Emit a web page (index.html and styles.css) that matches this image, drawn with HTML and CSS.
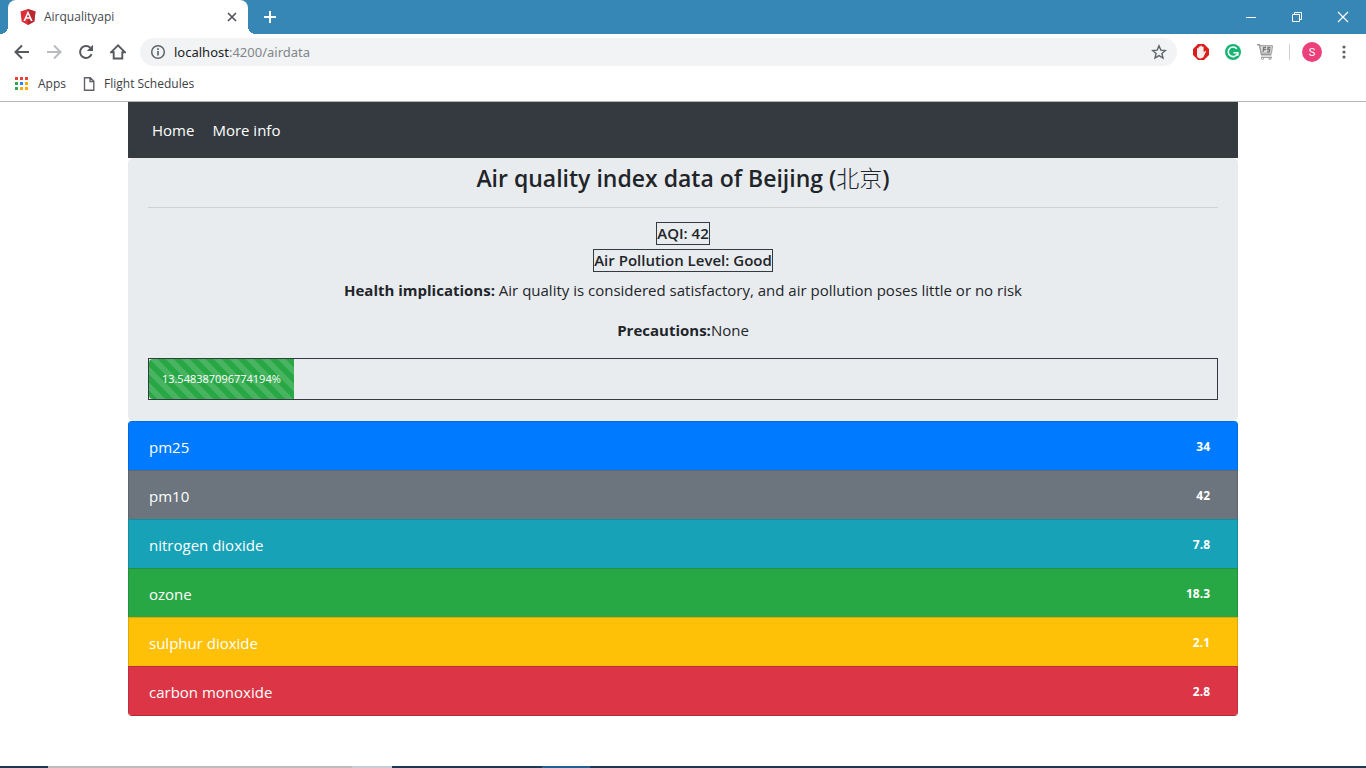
FILE: index.html
```html
<!DOCTYPE html>
<html lang="en">
<head>
<meta charset="utf-8">
<title>Airqualityapi</title>
<link rel="stylesheet" href="styles.css">
</head>
<body>
<div class="window">
  <header class="titlebar">
    <div class="tab">
      <svg class="tab-logo" width="16" height="16" viewBox="0 0 16 16"><path d="M8 0l7.500 2.600-1.200 9.800L8 16l-6.300-3.600L.5 2.600z" fill="#dd2f3a"/><path d="M8 0l7.500 2.600-1.200 9.800L8 16z" fill="#b72a33"/><path d="M8 1.800L3.400 12h1.800l.9-2.300h3.800l.9 2.300h1.800zM8 5.200l1.300 3.100H6.700z" fill="#fff" fill-rule="evenodd"/></svg>
      <span class="tab-title">Airqualityapi</span>
      <button class="plain" aria-label="Close tab"><svg width="10" height="10" viewBox="0 0 10 10"><path d="M1 1l8 8M9 1L1 9" stroke="#50545a" stroke-width="1.700"/></svg></button>
    </div>
    <button class="plain new-tab" aria-label="New tab"><svg width="12" height="12" viewBox="0 0 12 12"><path d="M6 0v12M0 6h12" stroke="#fff" stroke-width="2"/></svg></button>
    <div class="window-controls">
      <button class="plain" aria-label="Minimize"><svg width="12" height="12" viewBox="0 0 12 12"><path d="M1 6.500h10" stroke="#fff"/></svg></button>
      <button class="plain" aria-label="Restore"><svg width="12" height="12" viewBox="0 0 12 12" fill="none" stroke="#fff"><path d="M1.500 3.500h7v7h-7zM3.500 3.500v-2h7v7h-2"/></svg></button>
      <button class="plain" aria-label="Close"><svg width="12" height="12" viewBox="0 0 12 12"><path d="M1 1l10 10M11 1L1 11" stroke="#fff" stroke-width="1.200"/></svg></button>
    </div>
  </header>
  <div class="toolbar">
    <div class="nav-buttons">
      <button class="plain" aria-label="Back"><svg width="16" height="16" viewBox="0 0 16 16" fill="none" stroke="#55585d" stroke-width="2"><path d="M15 8H2M8 1.500L1.500 8 8 14.500"/></svg></button>
      <button class="plain" aria-label="Forward"><svg width="16" height="16" viewBox="0 0 16 16" fill="none" stroke="#b9bbbe" stroke-width="2"><path d="M1 8h13M8 1.500L14.500 8 8 14.500"/></svg></button>
      <button class="plain" aria-label="Reload"><svg width="16" height="16" viewBox="0 0 16 16"><path d="M13.600 10.200A6 6 0 1 1 12.300 3.700" fill="none" stroke="#55585d" stroke-width="2"/><path d="M15 .8V7H8.800z" fill="#55585d"/></svg></button>
      <button class="plain" aria-label="Home page"><svg width="16" height="16" viewBox="0 0 16 16"><path d="M8 1.400L1.200 8.200h2.500v6.300h8.600V8.200h2.500z" fill="none" stroke="#55585d" stroke-width="1.900"/></svg></button>
    </div>
    <div class="address">
      <svg width="16" height="16" viewBox="0 0 16 16"><circle cx="8" cy="8" r="6.300" fill="none" stroke="#5f6368" stroke-width="1.500"/><path d="M8 7v4.500M8 4.300v1.600" stroke="#5f6368" stroke-width="1.700"/></svg>
      <a class="url" href="#"><span class="host">localhost</span>:4200/airdata</a>
      <button class="plain" aria-label="Bookmark"><svg width="16" height="16" viewBox="0 0 16 16"><path d="M8 1.800l1.800 4.300 4.600.4-3.500 3 1.100 4.500L8 11.600 4 14l1.100-4.500-3.500-3 4.600-.4z" fill="none" stroke="#5f6368" stroke-width="1.400"/></svg></button>
    </div>
    <div class="extensions">
      <button class="plain" aria-label="Ad blocker"><svg width="16" height="16" viewBox="0 0 16 16"><path d="M5 0h6l5 5v6l-5 5H5l-5-5V5z" fill="#db1f1c"/><path d="M4 9V4.500q.8-1.200 1.600 0V3q.8-1.200 1.600 0v-.8q.9-1.200 1.700 0V3q.9-1 1.700 0v5.500l1.500-1.600q1.300-.4.800.9L10.500 13q-1 1.400-3.200 1.400Q4 14.200 4 11.200z" fill="#f5eeee"/></svg></button>
      <button class="plain" aria-label="Writing assistant"><svg width="16" height="16" viewBox="0 0 16 16"><circle cx="8" cy="8" r="8" fill="#16b573"/><path d="M11.800 4.800A4.800 4.800 0 1 0 12.300 10M8.500 8.800h4.300v3" fill="none" stroke="#fff" stroke-width="1.600"/></svg></button>
      <button class="plain" aria-label="Shopping cart"><svg width="16" height="16" viewBox="0 0 16 16" fill="none" stroke="#999"><path d="M0 .7h2.500l2 10.100h10" stroke-width="1.400"/><path d="M2.700 1.700h12.800l-1 7.500H4.200z" fill="#ddd"/><path d="M4 13.300h11" stroke-width="1.200"/><path d="M6 8l.7-4.500H9M6.500 5.700H9M13.500 3.500H11l-.3 2h2l-.4 2.300H10" stroke="#777" stroke-width="1.300"/><circle cx="5.500" cy="14.500" r="1"/><circle cx="13" cy="14.500" r="1"/></svg></button>
    </div>
    <span class="separator"></span>
    <button class="plain avatar" aria-label="Profile">S</button>
    <button class="plain" aria-label="Menu"><svg width="4" height="14" viewBox="0 0 4 14" fill="#5f6368"><circle cx="2" cy="2" r="1.600"/><circle cx="2" cy="7" r="1.600"/><circle cx="2" cy="12" r="1.600"/></svg></button>
  </div>
  <nav class="bookmarks">
    <a href="#"><svg width="14" height="14" viewBox="0 0 14 14"><path d="M0 0h3v3H0zM5 0h3v3H5zM10 0h3v3h-3z" fill="#ea4335"/><path d="M0 5h3v3H0zM0 10h3v3H0z" fill="#34a853"/><path d="M5 10h3v3H5z" fill="#fbaa05"/><path d="M5 5h3v3H5z" fill="#2684fc"/><path d="M10 5h3v3h-3zM10 10h3v3h-3z" fill="#fbaa05"/></svg>Apps</a>
    <a href="#"><svg width="12" height="14" viewBox="0 0 12 14" fill="none" stroke="#5f6368" stroke-width="1.400"><path d="M1.500.7h5.800l3.500 3.500v9.100H1.500zM7 .7v3.800h3.800"/></svg>Flight Schedules</a>
  </nav>
  <main class="container">
    <nav class="navbar"><a href="#">Home</a><a href="#">More info</a></nav>
    <section class="summary">
      <h1>Air quality index data of Beijing (<span class="cjk">北京</span>)</h1>
      <hr>
      <h2><span class="boxed">AQI: 42</span></h2>
      <h2><span class="boxed">Air Pollution Level: Good</span></h2>
      <p><strong>Health implications:</strong> Air quality is considered satisfactory, and air pollution poses little or no risk</p>
      <p><strong>Precautions:</strong>None</p>
      <div class="progress"><div class="bar" style="width:13.548%">13.548387096774194%</div></div>
    </section>
    <ul class="readings">
      <li class="blue">pm25<b>34</b></li>
      <li class="gray">pm10<b>42</b></li>
      <li class="teal">nitrogen dioxide<b>7.8</b></li>
      <li class="green">ozone<b>18.3</b></li>
      <li class="yellow">sulphur dioxide<b>2.1</b></li>
      <li class="red">carbon monoxide<b>2.8</b></li>
    </ul>
  </main>
  <footer class="taskbar"><span class="task-search"></span><span class="task-mic"></span><span class="task-gap"></span><span class="task-active"></span></footer>
</div>
</body>
</html>
```
FILE: styles.css
```css
* { box-sizing: border-box; }
body {
  margin: 0;
  background: #fff;
  color: #212529;
  font: 15px/24px "Open Sans", "Noto Sans", sans-serif;
}
.window { min-height: 100vh; display: flex; flex-direction: column; }
svg { display: block; flex: none; }
a { color: inherit; text-decoration: none; }
.plain {
  border: 0;
  padding: 0;
  background: none;
  color: inherit;
  display: flex;
  align-items: center;
  justify-content: center;
}
.titlebar { height: 34px; background: #3687b5; display: flex; align-items: center; padding-left: 8px; }
.tab {
  position: relative;
  width: 240px;
  height: 34px;
  padding: 0 11px 0 12px;
  display: flex;
  align-items: center;
  gap: 8px;
  background: #fff;
  border-radius: 8px 8px 0 0;
  font-size: 12px;
  color: #45494d;
}
.tab::before, .tab::after {
  content: "";
  position: absolute;
  bottom: 0;
  width: 8px;
  height: 8px;
}
.tab::before { right: 100%; background: radial-gradient(circle at 0 0, #3687b5 8px, #fff 8px); }
.tab::after { left: 100%; background: radial-gradient(circle at 100% 0, #3687b5 8px, #fff 8px); }
.tab-title { flex: 1; }
.new-tab { width: 28px; margin-left: 8px; }
.window-controls { display: flex; margin-left: auto; }
.window-controls .plain { width: 46px; height: 28px; }
.toolbar { height: 36px; display: flex; align-items: center; padding: 0 20px 0 14px; }
.nav-buttons { display: flex; gap: 16px; margin-right: 14px; }
.address {
  flex: 1;
  height: 28px;
  padding: 0 10px;
  border-radius: 14px;
  background: #f1f3f4;
  display: flex;
  align-items: center;
  gap: 8px;
}
.url { flex: 1; color: #80868b; font-family: "Noto Sans", sans-serif; font-size: 13px; }
.host { color: #202124; }
.extensions { display: flex; gap: 16px; margin: 0 16px; }
.separator { width: 1px; height: 16px; background: #ccced1; margin-right: 12px; }
.avatar { width: 20px; height: 20px; border-radius: 10px; background: #ec407a; color: #fff; font: 11px Roboto, sans-serif; margin-right: 20px; }
.bookmarks { height: 32px; border-bottom: 1px solid #b4b4b6; display: flex; gap: 17px; padding: 0 15px 4px; font-size: 12px; color: #3c4043; }
.bookmarks a { display: flex; align-items: center; gap: 9px; }
.container { width: 100%; max-width: 1142px; margin: 0 auto; padding: 0 16px; flex: 1; }
.navbar { height: 56px; background: #343a40; color: #fff; display: flex; align-items: center; gap: 18px; padding: 0 24px; }
.summary { background: #e9ecef; border-radius: 5px; padding: 5px 20px 21px; text-align: center; }
h1 { margin: 0; font-size: 23px; line-height: 30px; font-weight: 600; }
.cjk { font-family: "Noto Sans CJK SC", sans-serif; font-weight: 300; line-height: 20px; }
hr { border: 0; border-top: 1px solid #ced2d5; margin: 14px 0; }
h2 { margin: 0 0 4px; font-size: 15px; line-height: 23px; font-weight: 600; display: flex; justify-content: center; }
.boxed { border: 1px solid #343a40; line-height: 21px; }
p { margin: 0 0 16px; line-height: 24px; }
h2 + p { margin-top: 6px; }
.progress { height: 42px; border: 1px solid #343a40; display: flex; }
.bar {
  display: flex;
  align-items: center;
  justify-content: center;
  color: #fff;
  font-size: 11px;
  border-radius: 4px 0 0 4px;
  background: linear-gradient(45deg, rgba(255,255,255,.15) 25%, transparent 25%, transparent 50%, rgba(255,255,255,.15) 50%, rgba(255,255,255,.15) 75%, transparent 75%) 0 0 / 16px 16px #28a745;
}
.readings { list-style: none; margin: 0; padding: 0; color: #fff; border-radius: 4px; overflow: hidden; border-bottom: 1px solid #b02c39; }
.readings li { height: 49px; padding: 2px 27px 0 20px; display: flex; align-items: center; justify-content: space-between; border: 1px solid rgba(0,0,0,.13); border-bottom: 0; }
.readings b { font-size: 12px; }
.blue { background: #007bff; }
.gray { background: #6c757d; }
.teal { background: #17a2b8; }
.green { background: #28a745; }
.yellow { background: #ffc107; }
.red { background: #dc3545; }
.taskbar { height: 2px; background: #173a56; display: flex; padding-left: 48px; }
.task-search { width: 304px; background: #bdbdbd; }
.task-mic { width: 40px; background: #c5ced8; }
.task-gap { width: 150px; }
.task-active { width: 48px; background: #1b6394; }
```
